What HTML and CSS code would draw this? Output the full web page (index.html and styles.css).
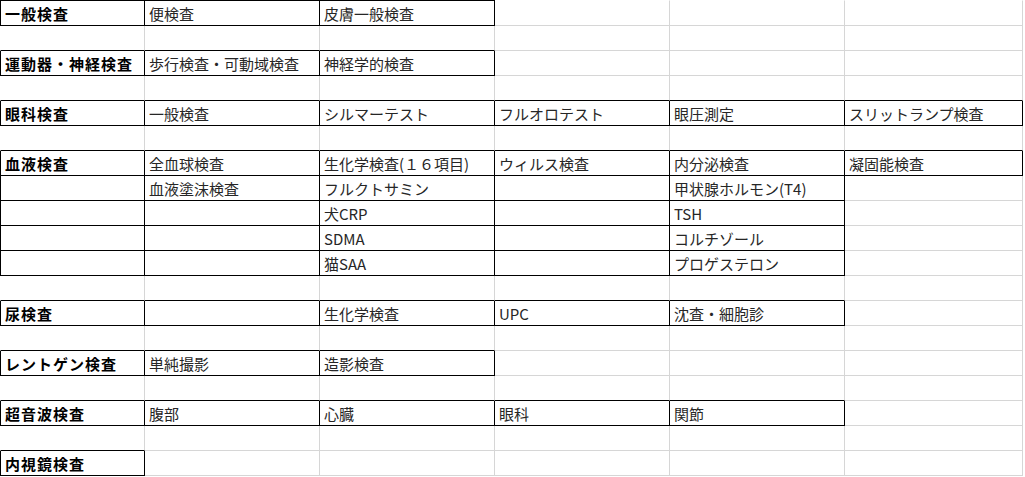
FILE: index.html
```html
<!DOCTYPE html>
<html lang="ja">
<head>
<meta charset="utf-8">
<link rel="stylesheet" href="styles.css">
</head>
<body>
<div class="sheet">
  <!-- row 1 -->
  <div class="cell c0 top k h">一般検査</div><div class="cell top k">便検査</div><div class="cell top k">皮膚一般検査</div><div class="cell top"></div><div class="cell top"></div><div class="cell top"></div>
  <!-- row 2 -->
  <div class="cell c0 kb"></div><div class="cell kb"></div><div class="cell kb"></div><div class="cell"></div><div class="cell"></div><div class="cell"></div>
  <!-- row 3 -->
  <div class="cell c0 k h">運動器・神経検査</div><div class="cell k">歩行検査・可動域検査</div><div class="cell k">神経学的検査</div><div class="cell"></div><div class="cell"></div><div class="cell"></div>
  <!-- row 4 -->
  <div class="cell c0 kb"></div><div class="cell kb"></div><div class="cell kb"></div><div class="cell kb"></div><div class="cell kb"></div><div class="cell kb"></div>
  <!-- row 5 -->
  <div class="cell c0 k h">眼科検査</div><div class="cell k">一般検査</div><div class="cell k">シルマーテスト</div><div class="cell k">フルオロテスト</div><div class="cell k">眼圧測定</div><div class="cell k">スリットランプ検査</div>
  <!-- row 6 -->
  <div class="cell c0 kb"></div><div class="cell kb"></div><div class="cell kb"></div><div class="cell kb"></div><div class="cell kb"></div><div class="cell kb"></div>
  <!-- row 7 -->
  <div class="cell c0 k h">血液検査</div><div class="cell k">全血球検査</div><div class="cell k">生化学検査(１６項目)</div><div class="cell k">ウィルス検査</div><div class="cell k">内分泌検査</div><div class="cell k">凝固能検査</div>
  <!-- row 8 -->
  <div class="cell c0 k"></div><div class="cell k">血液塗沫検査</div><div class="cell k">フルクトサミン</div><div class="cell k"></div><div class="cell k">甲状腺ホルモン(T4)</div><div class="cell"></div>
  <!-- row 9 -->
  <div class="cell c0 k"></div><div class="cell k"></div><div class="cell k">犬CRP</div><div class="cell k"></div><div class="cell k">TSH</div><div class="cell"></div>
  <!-- row 10 -->
  <div class="cell c0 k"></div><div class="cell k"></div><div class="cell k">SDMA</div><div class="cell k"></div><div class="cell k">コルチゾール</div><div class="cell"></div>
  <!-- row 11 -->
  <div class="cell c0 k"></div><div class="cell k"></div><div class="cell k">猫SAA</div><div class="cell k"></div><div class="cell k">プロゲステロン</div><div class="cell"></div>
  <!-- row 12 -->
  <div class="cell c0 kb"></div><div class="cell kb"></div><div class="cell kb"></div><div class="cell kb"></div><div class="cell kb"></div><div class="cell"></div>
  <!-- row 13 -->
  <div class="cell c0 k h">尿検査</div><div class="cell k"></div><div class="cell k">生化学検査</div><div class="cell k">UPC</div><div class="cell k">沈査・細胞診</div><div class="cell"></div>
  <!-- row 14 -->
  <div class="cell c0 kb"></div><div class="cell kb"></div><div class="cell kb"></div><div class="cell"></div><div class="cell"></div><div class="cell"></div>
  <!-- row 15 -->
  <div class="cell c0 k h">レントゲン検査</div><div class="cell k">単純撮影</div><div class="cell k">造影検査</div><div class="cell"></div><div class="cell"></div><div class="cell"></div>
  <!-- row 16 -->
  <div class="cell c0 kb"></div><div class="cell kb"></div><div class="cell kb"></div><div class="cell kb"></div><div class="cell kb"></div><div class="cell"></div>
  <!-- row 17 -->
  <div class="cell c0 k h">超音波検査</div><div class="cell k">腹部</div><div class="cell k">心臓</div><div class="cell k">眼科</div><div class="cell k">関節</div><div class="cell"></div>
  <!-- row 18 -->
  <div class="cell c0 kb"></div><div class="cell"></div><div class="cell"></div><div class="cell"></div><div class="cell"></div><div class="cell"></div>
  <!-- row 19 -->
  <div class="cell c0 k h">内視鏡検査</div><div class="cell"></div><div class="cell"></div><div class="cell"></div><div class="cell"></div><div class="cell"></div>
</div>
</body>
</html>
```

FILE: styles.css
```css
html, body {
  margin: 0;
  padding: 0;
  background: #fff;
}

.sheet {
  display: grid;
  grid-template-columns: 145px 175px 175px 175px 175px 178px;
  grid-template-rows: 26px;
  grid-auto-rows: 25px;
  font-family: "Noto Sans CJK JP", "Noto Sans", sans-serif;
  font-size: 15px;
  color: #262626;
}

.cell {
  box-sizing: border-box;
  border-right: 1px solid #d6d6d6;
  border-bottom: 1px solid #d6d6d6;
  padding: 0 0 2px 4px;
  line-height: 19px;
  display: flex;
  align-items: flex-end;
  white-space: nowrap;
  overflow: hidden;
}

.c0 {
  border-left: 1px solid transparent;
}

.top {
  border-top: 1px solid transparent;
}

.k {
  border-right-color: #000;
  border-bottom-color: #000;
}

.c0.k {
  border-left-color: #000;
}

.top.k {
  border-top-color: #000;
}

.kb {
  border-bottom-color: #000;
}

.h {
  font-weight: bold;
  color: #000;
  letter-spacing: 1px;
}
```
